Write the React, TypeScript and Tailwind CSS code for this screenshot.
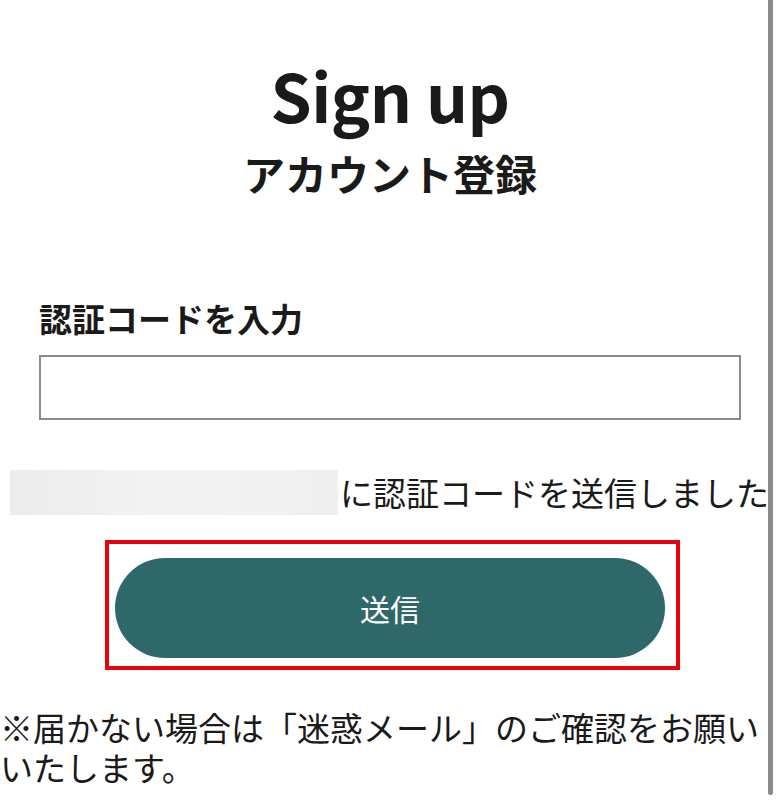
import React from "react";

export default function App() {
  return (
    <div className="relative w-[780px] h-[800px] overflow-hidden bg-white text-[#1a1a1a] font-['Noto_Sans_CJK_JP','Noto_Sans',sans-serif]">
      {/* Heading */}
      <div className="pt-[58px] flex flex-col items-center">
        <h1 className="text-[66px] leading-[72px] font-bold tracking-[-0.5px]">Sign up</h1>
        <h2 className="mt-[15px] text-[42px] leading-[56px] font-bold">アカウント登録</h2>
      </div>

      {/* Code input */}
      <div className="mt-[97px] px-[39px]">
        <label className="block text-[33px] leading-[40px] font-bold">認証コードを入力</label>
        <input
          type="text"
          className="mt-[17px] block w-full h-[65px] border-2 border-[#8c8c8c] bg-white px-3 text-[28px] outline-none"
        />
      </div>

      {/* Sent message */}
      <div className="mt-[50px] pl-[10px] flex items-center whitespace-nowrap">
        <div className="w-[328px] h-[45px] shrink-0 bg-gradient-to-r from-[#ececec] via-[#f3f3f3] to-[#efefef]" />
        <span className="ml-[2px] text-[33px] leading-[45px]">に認証コードを送信しました</span>
      </div>

      {/* Submit */}
      <div className="mt-[25px] ml-[105px] w-[575px] h-[130px] border-4 border-[#e8000b] pt-[14px] pl-[6px]">
        <button className="w-[550px] h-[100px] rounded-full bg-[#2e6868] text-white text-[30px] leading-none">
          送信
        </button>
      </div>

      {/* Note */}
      <p className="mt-[37px] text-[33px] leading-[40px]">
        ※届かない場合は「迷惑メール」のご確認をお願いいたします。
      </p>

      {/* Scrollbar */}
      <div className="absolute top-0 right-[7px] w-[5px] h-[795px] rounded-b-full bg-[#8a8a8a]" />
    </div>
  );
}
